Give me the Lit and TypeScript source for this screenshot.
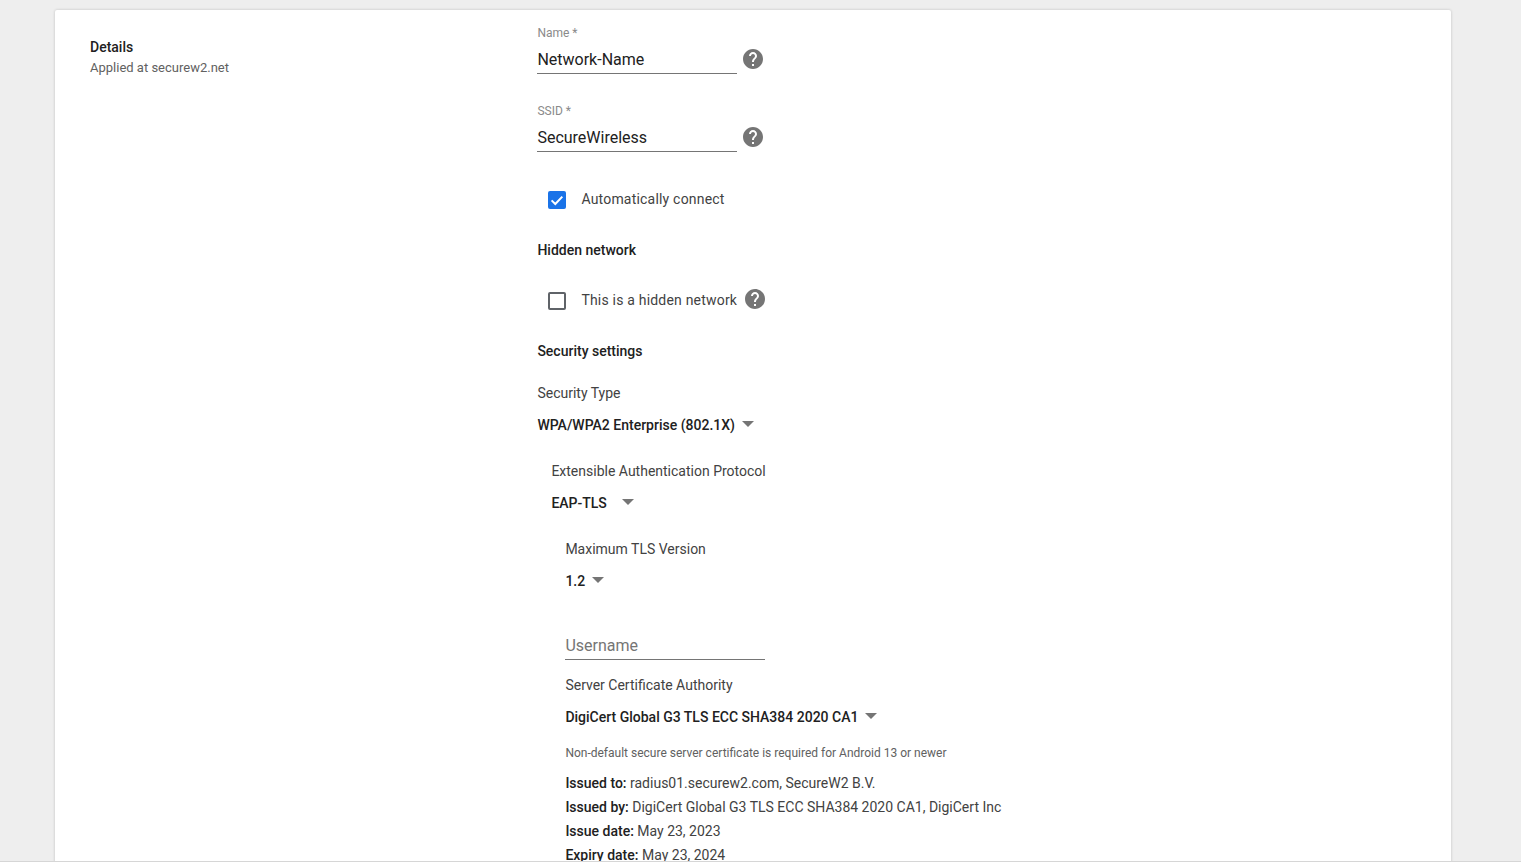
import { LitElement, html, css } from "lit";
import { customElement } from "lit/decorators.js";

const help = () => html`<svg class="help" viewBox="0 0 24 24" width="24" height="24"><path fill="#757575" d="M12 2C6.48 2 2 6.48 2 12s4.48 10 10 10 10-4.48 10-10S17.52 2 12 2zm1 17h-2v-2h2v2zm2.07-7.75l-.9.92C13.45 12.9 13 13.5 13 15h-2v-.5c0-1.1.45-2.1 1.17-2.83l1.24-1.26c.37-.36.59-.86.59-1.41 0-1.1-.9-2-2-2s-2 .9-2 2H8c0-2.21 1.79-4 4-4s4 1.79 4 4c0 .88-.36 1.68-.93 2.25z"/></svg>`;

@customElement("app-root")
export class AppRoot extends LitElement {
  static styles = css`
    :host {
      display: block;
      height: 862px;
      box-sizing: border-box;
      overflow: hidden;
      background: #eeeeee;
      border-bottom: 1px solid #d6d6d6;
      font-family: Roboto, "Liberation Sans", sans-serif;
      color: #212121;
    }
    .page { padding: 10px 70px 0 55px; }
    .card {
      display: flex;
      background: #fff;
      border-radius: 2px;
      box-shadow: 0 0 3px rgba(0, 0, 0, 0.2);
      min-height: 1000px;
    }
    .side { width: 482.4px; padding: 29px 0 0 35px; box-sizing: border-box; flex: none; }
    .side h2 { margin: 0; font-size: 14px; line-height: 16px; font-weight: 500; color: #212121; }
    .side p { margin: 5px 0 0; font-size: 13px; line-height: 16px; color: #616161; }
    .main { padding-top: 14px; flex: 1; font-size: 14px; }
    .field { display: flex; align-items: flex-end; height: 50px; margin-bottom: 28px; }
    .field .box { width: 200px; }
    .field label { display: block; font-size: 12px; line-height: 16px; margin-bottom: 1px; color: #8a8a8a; }
    .input {
      font-size: 16px; line-height: 32px; height: 32px; color: #212121;
      border-bottom: 1px solid #757575; box-sizing: border-box; padding-top: 2px;
    }
    .input.ph { color: #757575; }
    .help { display: block; flex: none; }
    .field .help { margin: 0 0 3px 4px; }
    .check { display: flex; align-items: center; height: 24px; padding-left: 11px; color: #424242; letter-spacing: 0.2px; }
    .check .text { margin-left: 15px; }
    .box-check {
      width: 18px; height: 18px; box-sizing: border-box; border-radius: 2px;
      border: 2px solid #5f6368; margin-top: 2px; flex: none;
    }
    .box-check.on { background: #1a73e8; border: 0; }
    .box-check svg { display: block; }
    .check .help { margin: -2px 0 0 5.5px; }
    .auto { margin-top: 35px; }
    h3 { margin: 31px 0 0; font-size: 14px; line-height: 16px; font-weight: 500; color: #212121; }
    .hidden-row { margin-top: 30px; }
    .lbl { line-height: 16px; color: #424242; margin-top: 28px; }
    .lbl.type { margin-top: 26px; }
    .lbl.ca { margin-top: 17px; }
    .select { display: flex; align-items: center; gap: 7px; height: 20px; margin-top: 14px; font-weight: 500; color: #212121; }
    .select.wide { gap: 15px; }
    .arrow {
      width: 0; height: 0; flex: none;
      border-left: 6px solid transparent; border-right: 6px solid transparent;
      border-top: 6px solid #757575; margin-bottom: 3px;
    }
    .in1 { padding-left: 14px; }
    .username { width: 200px; margin-top: 37px; }
    .note { font-size: 12px; line-height: 16px; color: #616161; margin-top: 18px; }
    .info { line-height: 24px; margin-top: 10px; color: #424242; }
    .info b { font-weight: 500; color: #212121; }
  `;

  render() {
    return html`<div class="page"><div class="card">
      <div class="side">
        <h2>Details</h2>
        <p>Applied at securew2.net</p>
      </div>
      <div class="main">
        <div class="field">
          <div class="box"><label>Name *</label><div class="input">Network-Name</div></div>
          ${help()}
        </div>
        <div class="field">
          <div class="box"><label>SSID *</label><div class="input">SecureWireless</div></div>
          ${help()}
        </div>
        <div class="check auto">
          <span class="box-check on"><svg viewBox="0 0 18 18" width="18" height="18"><path d="M3.6 9.4l3.7 3.6 7-7.4" fill="none" stroke="#fff" stroke-width="2"/></svg></span>
          <span class="text">Automatically connect</span>
        </div>
        <h3>Hidden network</h3>
        <div class="check hidden-row">
          <span class="box-check"></span>
          <span class="text">This is a hidden network</span>
          ${help()}
        </div>
        <h3>Security settings</h3>
        <div class="lbl type">Security Type</div>
        <div class="select"><span>WPA/WPA2 Enterprise (802.1X)</span><i class="arrow"></i></div>
        <div class="in1">
          <div class="lbl">Extensible Authentication Protocol</div>
          <div class="select wide"><span>EAP-TLS</span><i class="arrow"></i></div>
          <div class="in1">
            <div class="lbl">Maximum TLS Version</div>
            <div class="select"><span>1.2</span><i class="arrow"></i></div>
            <div class="username input ph">Username</div>
            <div class="lbl ca">Server Certificate Authority</div>
            <div class="select"><span>DigiCert Global G3 TLS ECC SHA384 2020 CA1</span><i class="arrow"></i></div>
            <div class="note">Non-default secure server certificate is required for Android 13 or newer</div>
            <div class="info">
              <div><b>Issued to:</b> radius01.securew2.com, SecureW2 B.V.</div>
              <div><b>Issued by:</b> DigiCert Global G3 TLS ECC SHA384 2020 CA1, DigiCert Inc</div>
              <div><b>Issue date:</b> May 23, 2023</div>
              <div><b>Expiry date:</b> May 23, 2024</div>
            </div>
          </div>
        </div>
      </div>
    </div></div>`;
  }
}
